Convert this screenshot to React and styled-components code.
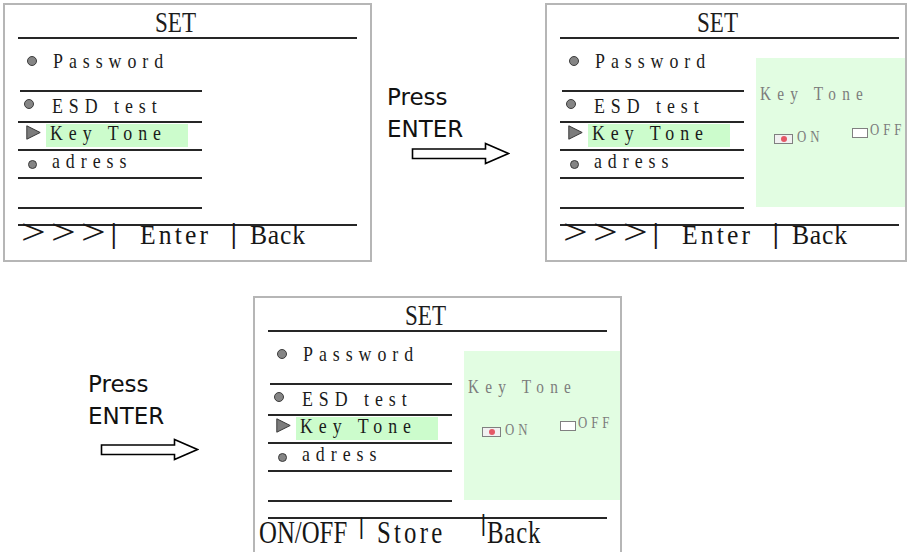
import React from 'react';
import styled, { createGlobalStyle } from 'styled-components';

const Global = createGlobalStyle`
  *, *::before, *::after { box-sizing: border-box; }
  html, body { margin: 0; padding: 0; background: #fff; overflow: hidden; }
  body { font-family: "Liberation Serif", "Times New Roman", serif; color: #1c1c1c; }
`;

const Page = styled.div`
  width: 908px;
  height: 552px;
  overflow: hidden;
  padding: 3px 0 0 3px;
  display: flex;
  flex-direction: column;
`;

const Band = styled.div`
  display: flex;
  align-items: flex-start;
  margin-top: ${p => p.$mt || 0}px;
`;

/* ---------- screen ---------- */
const Frame = styled.section`
  flex: none;
  width: ${p => p.$w}px;
  height: 259px;
  border: 2px solid #b6b6b6;
  background: #fff;
  display: flex;
  flex-direction: column;
  overflow: hidden;
`;

const Header = styled.div`
  flex: none;
  width: 339px;
  height: 34px;
  margin-left: 13px;
  border-bottom: 2px solid #262626;
  padding-left: 137px;
  font-size: 30px;
  line-height: 34px;
  white-space: nowrap;
`;

const Squeeze = styled.span`
  display: inline-block;
  white-space: nowrap;
  transform: scaleX(${p => p.$sx || 1});
  transform-origin: 0 50%;
  letter-spacing: ${p => p.$ls || 0}px;
`;

const Body = styled.div`
  display: flex;
  align-items: flex-start;
`;

const Menu = styled.div`
  flex: none;
  width: 184px;
  margin-left: 13px;
  display: flex;
  flex-direction: column;
`;

const MenuRow = styled.div`
  display: flex;
  align-items: flex-start;
  height: ${p => p.$h}px;
  margin-left: ${p => p.$inset || 0}px;
  border-bottom: 2px solid #262626;
`;

const Dot = styled.span`
  flex: none;
  width: ${p => p.$size}px;
  height: ${p => p.$size}px;
  border-radius: 50%;
  background: #858585;
  border: 1px solid #3c3c3c;
  margin-left: ${p => p.$ml}px;
  margin-top: ${p => p.$mt}px;
`;

const Pointer = styled.svg`
  flex: none;
  margin-left: ${p => p.$ml}px;
  margin-top: ${p => p.$mt}px;
`;

const MenuText = styled.span`
  flex: none;
  display: inline-block;
  white-space: nowrap;
  font-size: 21px;
  line-height: 20px;
  letter-spacing: 7px;
  color: #1a1a1a;
  transform: scaleX(0.85);
  transform-origin: 0 50%;
  margin-left: ${p => p.$ml || 0}px;
  margin-top: ${p => p.$mt || 0}px;
`;

const Highlight = styled.div`
  flex: none;
  display: flex;
  align-items: flex-start;
  width: 142px;
  height: 23px;
  margin-left: 5px;
  margin-top: 1px;
  padding-left: 4px;
  background: #ccfccc;
`;

/* ---------- key tone side panel ---------- */
const Side = styled.div`
  flex: 1;
  height: 149px;
  margin-left: 12px;
  margin-top: 19px;
  background: #e2fde2;
  display: flex;
  flex-direction: column;
`;

const SideTitle = styled.span`
  align-self: flex-start;
  display: inline-block;
  white-space: nowrap;
  margin-top: 28px;
  margin-left: 4px;
  font-size: 18px;
  line-height: 17px;
  letter-spacing: 7.3px;
  color: #7c7c7c;
  transform: scaleX(0.85);
  transform-origin: 0 50%;
`;

const Options = styled.div`
  display: flex;
  align-items: flex-start;
  margin-top: 18px;
`;

const Option = styled.div`
  flex: none;
  display: flex;
  align-items: flex-start;
  width: ${p => (p.$w ? `${p.$w}px` : 'auto')};
  margin-left: ${p => p.$ml || 0}px;
  margin-top: ${p => p.$mt || 0}px;
`;

const Check = styled.span`
  flex: none;
  display: flex;
  align-items: center;
  justify-content: center;
  width: ${p => p.$w}px;
  height: ${p => p.$h}px;
  margin-top: ${p => p.$mt}px;
  border: 1px solid #808080;
  background: ${p => (p.$on ? '#f1f1f1' : '#fff')};
`;

const RedDot = styled.span`
  width: 6px;
  height: 6px;
  border-radius: 50%;
  background: #e45866;
`;

const OptionText = styled.span`
  flex: none;
  display: inline-block;
  white-space: nowrap;
  font-size: 16px;
  line-height: 16px;
  letter-spacing: 5px;
  color: #7c7c7c;
  margin-left: ${p => p.$ml}px;
  margin-top: 1px;
  transform: scaleX(0.8);
  transform-origin: 0 50%;
`;

/* ---------- footer ---------- */
const Footer = styled.div`
  flex: none;
  width: 339px;
  margin-left: 13px;
  margin-top: 15px;
  border-top: 2px solid #262626;
`;

const FooterLine = styled.div`
  display: flex;
  align-items: flex-start;
  margin-left: ${p => p.$start}px;
`;

const FooterCell = styled.div`
  flex: none;
  width: ${p => (p.$w ? `${p.$w}px` : 'auto')};
  font-size: ${p => p.$fs}px;
  line-height: ${p => p.$lh}px;
  white-space: nowrap;
  color: #161616;
`;

/* ---------- press enter ---------- */
const Hint = styled.div`
  flex: none;
  width: ${p => p.$w}px;
  margin-left: ${p => p.$ml}px;
  margin-top: ${p => p.$mt}px;
  display: flex;
  flex-direction: column;
  align-items: flex-start;
`;

const HintText = styled.div`
  font-family: "DejaVu Sans", Verdana, sans-serif;
  font-size: 23px;
  line-height: 32px;
  color: #111;
`;

const HintArrow = styled.svg`
  display: block;
  margin-left: ${p => p.$ml}px;
  margin-top: ${p => p.$mt}px;
`;

function Arrow({ ml, mt }) {
  return (
    <HintArrow $ml={ml} $mt={mt} width="99" height="23" viewBox="0 0 99 23">
      <path
        d="M1.5 7 H74.5 V1.5 L97.5 11.5 L74.5 21.5 V16.5 H1.5 Z"
        fill="#fff"
        stroke="#000"
        strokeWidth="1.6"
        strokeLinejoin="miter"
      />
    </HintArrow>
  );
}

function PressEnter({ w, ml, mt, arrowMl, arrowMt }) {
  return (
    <Hint $w={w} $ml={ml} $mt={mt}>
      <HintText>
        Press
        <br />
        ENTER
      </HintText>
      <Arrow ml={arrowMl} mt={arrowMt} />
    </Hint>
  );
}

const navFooter = {
  start: 3,
  cells: [
    { t: '>>>', w: 89, fs: 35, lh: 14.4, sx: 1.25, ls: 4.3 },
    { t: '|', w: 30, fs: 29, lh: 15.6, sx: 1.3 },
    { t: 'Enter', w: 90, fs: 27, lh: 19.8, sx: 0.95, ls: 3.3 },
    { t: '|', w: 20, fs: 29, lh: 15.6, sx: 1.3 },
    { t: 'Back', fs: 27, lh: 19.8, sx: 0.95, ls: 0.8 },
  ],
};

const toneFooter = {
  start: -9,
  cells: [
    { t: 'ON/OFF', w: 99, fs: 31, lh: 27.1, sx: 0.8, ls: 0 },
    { t: '|', w: 19, fs: 26, lh: 14.4, sx: 1.3 },
    { t: 'Store', w: 103, fs: 31, lh: 27.1, sx: 0.8, ls: 4 },
    { t: '|', w: 7, fs: 26, lh: 8.4, sx: 1.3 },
    { t: 'Back', fs: 31, lh: 27.1, sx: 0.8, ls: 1 },
  ],
};

function KeyTonePanel() {
  return (
    <Side>
      <SideTitle>Key Tone</SideTitle>
      <Options>
        <Option $ml={18} $w={78} $mt={7}>
          <Check $w={19} $h={10} $mt={6} $on>
            <RedDot />
          </Check>
          <OptionText $ml={4}>ON</OptionText>
        </Option>
        <Option>
          <Check $w={16} $h={10} $mt={7} />
          <OptionText $ml={2}>OFF</OptionText>
        </Option>
      </Options>
    </Side>
  );
}

function Screen({ width, side, footer }) {
  return (
    <Frame $w={width}>
      <Header>
        <Squeeze $sx={0.77}>SET</Squeeze>
      </Header>
      <Body>
        <Menu>
          <MenuRow $h={53} $inset={2}>
            <Dot $size={10} $ml={7} $mt={17} />
            <MenuText $ml={16} $mt={12}>Password</MenuText>
          </MenuRow>
          <MenuRow $h={31}>
            <Dot $size={10} $ml={6} $mt={7} />
            <MenuText $ml={18} $mt={4}>ESD test</MenuText>
          </MenuRow>
          <MenuRow $h={28}>
            <Pointer $ml={8} $mt={2} width="15" height="15" viewBox="0 0 15 15">
              <polygon points="0.8,0.8 14.2,7.5 0.8,14.2" fill="#7c7c7c" stroke="#3a3a3a" strokeWidth="1" />
            </Pointer>
            <Highlight>
              <MenuText $mt={-1}>Key Tone</MenuText>
            </Highlight>
          </MenuRow>
          <MenuRow $h={28}>
            <Dot $size={9} $ml={10} $mt={9} />
            <MenuText $ml={15} $mt={0}>adress</MenuText>
          </MenuRow>
          <MenuRow $h={30} />
        </Menu>
        {side && <KeyTonePanel />}
      </Body>
      <Footer>
        <FooterLine $start={footer.start}>
          {footer.cells.map((c, i) => (
            <FooterCell key={i} $w={c.w} $fs={c.fs} $lh={c.lh}>
              <Squeeze $sx={c.sx} $ls={c.ls}>
                {c.t}
              </Squeeze>
            </FooterCell>
          ))}
        </FooterLine>
      </Footer>
    </Frame>
  );
}

export default function App() {
  return (
    <>
      <Global />
      <Page>
        <Band>
          <Screen width={369} footer={navFooter} />
          <PressEnter w={158} ml={15} mt={78} arrowMl={24} arrowMt={-3} />
          <Screen width={362} side footer={navFooter} />
        </Band>
        <Band $mt={34}>
          <PressEnter w={165} ml={85} mt={72} arrowMl={12} arrowMt={6} />
          <Screen width={369} side footer={toneFooter} />
        </Band>
      </Page>
    </>
  );
}
